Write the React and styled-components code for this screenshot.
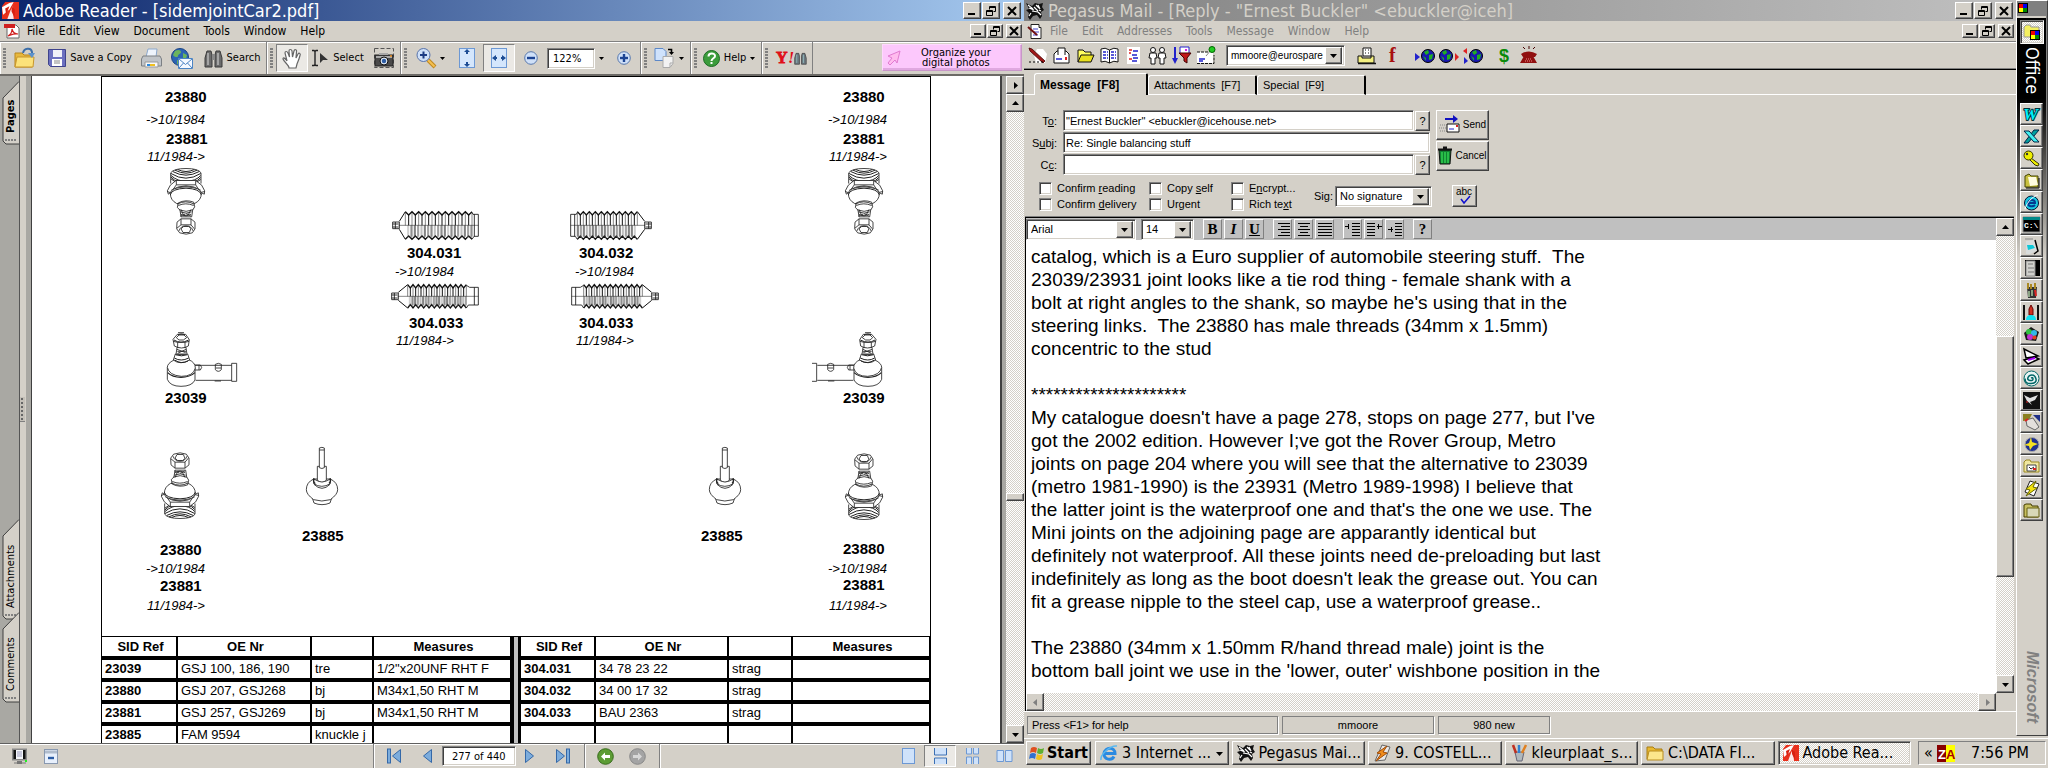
import React from "react";
import styled, { createGlobalStyle, css } from "styled-components";

const face = "#d4d0c8";
const ui = `"DejaVu Sans Condensed", "DejaVu Sans", sans-serif`;
const sans = `"Liberation Sans", Arial, sans-serif`;

const raised = css`
  border: 1px solid;
  border-color: #fff #404040 #404040 #fff;
  box-shadow: inset -1px -1px #808080;
  background: ${face};
`;
const sunken = css`
  border: 1px solid;
  border-color: #808080 #fff #fff #808080;
  box-shadow: inset 1px 1px #404040, inset -1px -1px ${face};
  background: #fff;
`;
const dither = css`
  background: repeating-conic-gradient(#fff 0 25%, ${face} 0 50%) 0 0 / 2px 2px;
`;

const Global = createGlobalStyle`
  * { box-sizing: border-box; }
  body { margin: 0; background: ${face}; color: #000; overflow: hidden; }
  button, input, select, textarea { font: inherit; color: inherit; margin: 0; padding: 0; border-radius: 0; outline: none; }
  svg { display: block; flex: none; overflow: visible; }
`;

const Desktop = styled.div`
  display: grid;
  grid-template-columns: minmax(0, 1fr) minmax(0, 1fr);
  height: 100vh;
`;
const Screen = styled.div`
  display: flex;
  flex-direction: column;
  min-width: 0;
  min-height: 0;
`;
const Upper = styled.div`
  display: flex;
  flex: 1;
  min-height: 0;
`;
const AppWindow = styled.section`
  display: flex;
  flex-direction: column;
  flex: 1;
  min-width: 0;
  min-height: 0;
  background: ${face};
`;

/* ---------- window chrome ---------- */
const TitleBar = styled.header`
  display: flex;
  align-items: center;
  gap: 4px;
  height: 21px;
  padding: 0 3px 0 2px;
  font: 18px/20px ${ui};
  white-space: nowrap;
  color: ${(p) => (p.$active ? "#fff" : face)};
  background: ${(p) =>
    p.$active ? "linear-gradient(90deg, #0a246a, #a6caf0)" : "linear-gradient(90deg, #808080, #c0c0c0)"};
`;
const TitleText = styled.span`
  flex: 1;
  overflow: hidden;
`;
const WinButtons = styled.div`
  display: flex;
  gap: 1px;
  margin-left: auto;
  & > :last-child {
    margin-left: 2px;
  }
`;
const WinButton = styled.button`
  ${raised}
  display: grid;
  place-items: center;
  width: ${(p) => (p.$small ? 16 : 18)}px;
  height: ${(p) => (p.$small ? 14 : 17)}px;
`;
const MenuBar = styled.nav`
  display: flex;
  align-items: center;
  height: 20px;
  padding: 0 2px 0 4px;
  font: 12px/18px ${ui};
  color: ${(p) => (p.$dim ? "#808080" : "#000")};
`;
const MenuItem = styled.button`
  border: 0;
  background: none;
  padding: 0 7px;
`;

const MinGlyph = () => (
  <svg width="10" height="10"><rect x="1" y="7" width="7" height="2" fill="#000" /></svg>
);
const RestoreGlyph = () => (
  <svg width="10" height="10" fill="none" stroke="#000">
    <path d="M3.500 3.500v-3h6v5h-2M3 1.500h7" /><path d="M.5 4.500h6v5h-6zM0 5.500h7" />
  </svg>
);
const CloseGlyph = () => (
  <svg width="10" height="10" stroke="#000" strokeWidth="2"><path d="M1 1l8 8M9 1l-8 8" /></svg>
);
const WindowControls = ({ small }) => (
  <WinButtons>
    <WinButton $small={small} aria-label="Minimize"><MinGlyph /></WinButton>
    <WinButton $small={small} aria-label="Restore"><RestoreGlyph /></WinButton>
    <WinButton $small={small} aria-label="Close"><CloseGlyph /></WinButton>
  </WinButtons>
);

const Arrow = ({ dir = "down", color = "#000" }) => {
  const d = { down: "M1 3h7l-3.500 4z", up: "M1 6h7l-3.500 -4z", left: "M6 1v7l-4 -3.500z", right: "M3 1v7l4 -3.500z" }[dir];
  return <svg width="9" height="9"><path d={d} fill={color} /></svg>;
};
const Caret = () => <svg width="5" height="3"><path d="M0 0h5l-2.500 3z" /></svg>;

const ScrollButton = styled.button`
  ${raised}
  display: grid;
  place-items: center;
  width: 18px;
  height: 18px;
  flex: none;
`;
const Track = styled.div`
  ${dither}
  flex: ${(p) => p.$grow} 0 0;
`;
const Thumb = styled.div`
  ${raised}
  flex: ${(p) => p.$flex};
`;

/* ---------- reader toolbar ---------- */
const ReaderTools = styled.div`
  display: flex;
  height: 33px;
  border-top: 1px solid #808080;
  box-shadow: inset 0 1px #fff;
  font: 11px/14px ${ui};
  white-space: nowrap;
`;
const ToolGroup = styled.div`
  display: flex;
  align-items: center;
  border-left: 1px solid #fff;
  border-right: 1px solid #808080;
  padding-left: 2px;
`;
const Grip = styled.i`
  width: 3px;
  height: 20px;
  margin-right: ${(p) => (p.$gap ? 3 : 0)}px;
  background: repeating-linear-gradient(#808080 0 2px, ${face} 2px 3px);
`;
const ToolButton = styled.button`
  display: flex;
  align-items: center;
  justify-content: center;
  gap: 4px;
  width: ${(p) => p.$w}px;
  height: 28px;
  border: 1px solid transparent;
  background: none;
  ${(p) =>
    p.$pressed &&
    css`
      border-color: #808080 #fff #fff #808080;
      background: #ebe9e5;
    `}
`;
const ZoomBox = styled.input`
  ${sunken}
  width: 48px;
  height: 21px;
  padding: 0 5px;
`;
const AdButton = styled.button`
  width: 140px;
  height: 27px;
  margin: 2px 2px 0 auto;
  display: flex;
  align-items: center;
  gap: 20px;
  padding: 0 4px;
  border: 1px solid;
  border-color: #ffd8ff #c896c8 #c896c8 #ffd8ff;
  box-shadow: inset -1px -2px #e0a8e0;
  background: #fcc8fc;
  font: 11px/10px ${ui};
`;

const OpenIcon = () => (
  <svg width="22" height="22" viewBox="0 0 22 22">
    <path d="M1 20V6h7l2 2h8v12z" fill="#e8b83c" stroke="#b8861c" />
    <path d="M1 20l2-10h17l-1 10z" fill="#fce27a" stroke="#c8962c" />
    <path d="M9 6c1-5 8-6 9-1v3" fill="none" stroke="#3c6ea8" strokeWidth="2" /><path d="M14 6h7l-3 5z" fill="#5c92cc" />
  </svg>
);
const SaveIcon = () => (
  <svg width="18" height="18" viewBox="0 0 18 18">
    <path d="M.5 .5h17v17h-15l-2-2z" fill="#6c70c0" stroke="#40448c" />
    <rect x="5" y="1" width="9" height="7" fill="#f0f0f8" /><rect x="4" y="10" width="10" height="7" fill="#fff" />
    <path d="M6 12h6M6 14h6" stroke="#888" />
  </svg>
);
const PrintIcon = () => (
  <svg width="21" height="20" viewBox="0 0 21 20">
    <path d="M5 9L7 1h9l-1 8z" fill="#eef4fc" stroke="#8ca8cc" />
    <path d="M2 8h17l1.500 3v7H.5v-7z" fill="#c0c4c8" stroke="#7c8084" />
    <path d="M4 14h13v5H4z" fill="#f8f8f8" stroke="#999" /><path d="M6 17h3" stroke="#2a8ae0" strokeWidth="2" /><path d="M9 17h5" stroke="#f0c020" strokeWidth="2" />
  </svg>
);
const MailGlobeIcon = () => (
  <svg width="22" height="21" viewBox="0 0 22 21">
    <circle cx="9" cy="9" r="8.500" fill="#2c64b4" stroke="#1c4484" />
    <path d="M4 3c3-2 6-1 6 1s-3 2-3 4-4 1-5-1zM12 5l4 2-1 4-3-1zM6 12l3 1-1 4-2-1z" fill="#6cb45c" />
    <path d="M7.500 10.500h14v10h-14z" fill="#f4f8ff" stroke="#4c84c4" /><path d="M8 11l6.500 5.500L21 11M8 20l4.500-5M21 20l-4.500-5" fill="none" stroke="#4c84c4" />
  </svg>
);
const Binoculars = () => (
  <svg width="19" height="19" viewBox="0 0 19 19">
    <path d="M3 2h4l1 4v12H1V9zM12 2h4l2 7v9h-7V6z" fill="#6c6c6c" stroke="#3a3a3a" />
    <path d="M8 5h3v6H8z" fill="#888" /><path d="M4 4v12M14 4v12" stroke="#b8b8b8" strokeWidth="1.500" />
  </svg>
);
const HandIcon = () => (
  <svg width="20" height="21" viewBox="0 0 20 21">
    <path d="M7 20c0-3-5-6-6-9 0-2 2-1 4 2L3 5c0-2 2-2 3 0l1.500 4L7 3c0-2 2.500-2 3 0l.5 6L12 3c.5-2 3-1.500 2.500.5L14 10l2-4c1-1.500 3-.5 2 1.500-1 4-2 6-3 8.500L14 20z" fill="#fff" stroke="#666" strokeWidth="1.200" />
  </svg>
);
const SelectIcon = () => (
  <svg width="18" height="18" viewBox="0 0 18 18">
    <path d="M1 1.500h2l1 1 1-1h2M4 2v14M1 16.500h2l1-1 1 1h2" fill="none" stroke="#222" strokeWidth="1.400" /><path d="M9 4l8 7h-5l-3 3z" fill="#333" />
  </svg>
);
const CameraIcon = () => (
  <svg width="20" height="20" viewBox="0 0 20 20">
    <rect x=".5" y=".5" width="19" height="19" fill="none" stroke="#555" strokeDasharray="4 2" />
    <path d="M1 7h18v11H1z" fill="#4a4a4a" stroke="#222" /><path d="M5 5h9v2H5zM2 8h16v2H2z" fill="#a8a8a8" />
    <circle cx="10" cy="13" r="4" fill="#dde6f0" stroke="#111" /><circle cx="10" cy="13" r="2.200" fill="#2c5ca4" /><circle cx="17" cy="8" r="1" fill="#f09020" />
  </svg>
);
const MagnifierIcon = () => (
  <svg width="20" height="20" viewBox="0 0 20 20">
    <path d="M12 12l7 7" stroke="#c08820" strokeWidth="4" /><path d="M12 12l6.500 6.500" stroke="#f4c050" strokeWidth="2" />
    <circle cx="7.500" cy="7" r="6.500" fill="#cfe0f8" stroke="#5874ac" /><path d="M4 7h7M7.500 3.500v7" stroke="#1c3c84" strokeWidth="2" />
  </svg>
);
const FitIcon = ({ wide }) => (
  <svg width="16" height="20" viewBox="0 0 16 20">
    <rect x=".5" y=".5" width="15" height="19" fill="#d4e6fc" stroke="#6c98d4" />
    {wide ? (
      <path d="M1 10l4-3v2h1v2H5v2zM15 10l-4-3v2h-1v2h1v2z" fill="#1c4c94" />
    ) : (
      <path d="M8 1l3 3H9v2H7V4H5zM8 19l3-3H9v-2H7v2H5z" fill="#1c4c94" />
    )}
  </svg>
);
const RoundZoom = ({ plus }) => (
  <svg width="14" height="14" viewBox="0 0 14 14">
    <circle cx="7" cy="7" r="6.300" fill="#cfe0f8" stroke="#5878ac" /><path d="M3 7h8" stroke="#1c4494" strokeWidth="2.400" />
    {plus && <path d="M7 3v8" stroke="#1c4494" strokeWidth="2.400" />}
  </svg>
);
const RotateIcon = () => (
  <svg width="21" height="20" viewBox="0 0 21 20">
    <path d="M1 .5h8l3 3v9H1z" fill="#cfe2fc" stroke="#5c88c8" /><path d="M9 8.500h10v7l-3 4H9z" fill="#f2f2f2" stroke="#aaa" /><path d="M19 15h-3v4" fill="none" stroke="#aaa" />
    <path d="M14 1.500h3.500v4" fill="none" stroke="#000" strokeWidth="1.600" /><path d="M15 4h5l-2.500 3z" />
  </svg>
);
const HelpIcon = () => (
  <svg width="17" height="17" viewBox="0 0 17 17">
    <circle cx="8.500" cy="8.500" r="8" fill="#3c9c3c" stroke="#1c6c24" /><path d="M5.500 6.500c0-4 6.500-4 6.500-.5C12 8.500 8.500 8 8.500 11" fill="none" stroke="#fff" strokeWidth="2" /><rect x="7.500" y="12" width="2" height="2" fill="#fff" />
  </svg>
);
const YahooIcon = () => (
  <svg width="33" height="20" viewBox="0 0 33 20">
    <text x="2" y="15" fontFamily="Liberation Serif" fontWeight="bold" fontSize="16" fill="#e01018" stroke="#e01018" strokeWidth=".8">Y</text>
    <text x="14" y="15" fontFamily="Liberation Serif" fontWeight="bold" fontStyle="italic" fontSize="16" fill="#e01018">!</text>
    <g transform="translate(20 4) scale(.68)"><path d="M3 2h4l1 4v12H1V9zM12 2h4l2 7v9h-7V6z" fill="#6c7880" stroke="#3a3a3a" /><path d="M4 4v12M14 4v12" stroke="#9cc" /></g>
  </svg>
);
const CursorArrow = () => (
  <svg width="14" height="16" viewBox="0 0 14 16"><path d="M13 1L1 6l4 2-4 5 2 2 5-5 2 3z" fill="#fbe" stroke="#e07ad0" /></svg>
);
const AdobeIcon = ({ w = 16 }) => (
  <svg width={w} height={w} viewBox="0 0 16 16">
    <path d="M3 0h13v16H0V4z" fill="#e8301c" /><path d="M0 5l7-4 4-1-4 7-6 5z" fill="#fff" /><path d="M5 16l3-8 2-4 1 12z" fill="#fff" opacity=".9" />
    <path d="M3 6l4-2-3 8zM9 4l3 3v8l-3-6z" fill="#d82010" />
  </svg>
);
const PdfIcon = () => (
  <svg width="16" height="16" viewBox="0 0 16 16">
    <path d="M3 2h9l3 3v10H3z" fill="#fff" stroke="#666" /><path d="M0 1h11v4H0z" fill="#d02020" />
    <path d="M4 13c4-2 4-5 4-7 1 4 3 5 6 5-4-1-7 1-10 2z" fill="none" stroke="#d02020" strokeWidth="1.200" />
  </svg>
);

/* ---------- reader body ---------- */
const ReaderBody = styled.div`
  display: flex;
  flex: 1;
  min-height: 0;
  border-top: 2px solid #6c6a66;
`;
const Rail = styled.div`
  display: flex;
  flex-direction: column;
  justify-content: space-between;
  width: 20px;
  padding: 5px 0 40px 2px;
  background: #a9a8a3;
  border-right: 1px solid #555;
`;
const RailStack = styled.div`
  display: flex;
  flex-direction: column;
`;
const RailTab = styled.button`
  position: relative;
  width: 17px;
  height: ${(p) => p.$h}px;
  border: 0;
  padding: 0 0 12px;
  background: none;
  writing-mode: vertical-rl;
  text-align: right;
  font: ${(p) => (p.$bold ? "bold" : "normal")} 11px/16px ${ui};
  & + & {
    margin-top: -8px;
  }
`;
const TabShape = styled.svg`
  position: absolute;
  inset: 0;
`;
const TabText = styled.span`
  position: relative;
  display: block;
  height: 100%;
  transform: rotate(180deg);
  text-align: left;
`;
const SideTab = ({ h, bold, children }) => (
  <RailTab $h={h} $bold={bold}>
    <TabShape width="17" height={h}>
      <path d={`M17 .5L1 17V${h - 4}l3 3h13`} fill={face} stroke="#404040" />
      <path d={`M3 ${h - 5}h12`} stroke="#808080" strokeWidth="2" strokeDasharray="2 1" />
    </TabShape>
    <TabText>{children}</TabText>
  </RailTab>
);
const Splitter = styled.div`
  display: flex;
  align-items: center;
  width: 6px;
  background: ${face};
  &::after {
    content: "";
    width: 5px;
    height: 24px;
    border-bottom: 1px solid #808080;
    background: radial-gradient(#666 1px, transparent 1px) 0 0 / 4px 4px #c4c0b8;
  }
`;
const DocView = styled.div`
  display: flex;
  flex: 1;
  min-width: 0;
  border: 0 solid #a9a8a3;
  border-width: 0 4px 0 5px;
  box-shadow: inset 1px 0 #404040;
`;
const Paper = styled.main`
  display: flex;
  justify-content: center;
  flex: 1;
  min-width: 0;
  overflow: hidden;
  background: #fff;
  border: 1px solid #404040;
  border-width: 0 2px 0 1px;
`;
const Sheet = styled.article`
  flex: none;
  width: 830px;
  border: 1px solid #000;
  border-bottom: 0;
`;
const Diagram = styled.div`
  position: relative;
  height: 559px;
`;
const PartNumber = styled.b`
  position: absolute;
  left: ${(p) => p.$x}px;
  top: ${(p) => p.$y}px;
  font: bold 15px/14px ${sans};
`;
const PartDate = styled.i`
  position: absolute;
  left: ${(p) => p.$x}px;
  top: ${(p) => p.$y}px;
  font: italic 13px/16px ${sans};
  white-space: nowrap;
`;
const Figure = styled.svg`
  position: absolute;
  left: ${(p) => p.$x}px;
  top: ${(p) => p.$y}px;
`;
const DocScroll = styled.div`
  display: flex;
  flex-direction: column;
  width: 18px;
`;

const line = { fill: "none", stroke: "#222", strokeWidth: 2.5 };
const BallJoint = ({ x, y, flip }) => (
  <Figure $x={x} $y={y} width="38" height="67" viewBox="0 0 114 200">
    <g {...line} transform={flip ? "translate(0 200) scale(1 -1)" : undefined}>
      <path d="M11 46V14Q20 1 57 1t45 13v32" fill="#fff" />
      <path d="M12 16Q57 44 101 16M17 10q40 22 80 0M24 6q33 18 66 0M32 4q25 12 50 0M12 22q20 18 45 17 30 0 44-17M12 27q10 10 20 13M12 32l14 10M101 28q-8 10-20 13M101 34l-12 8" strokeWidth="3" />
      <path d="M1 68l9-17 17-14h59l18 14 9 17-1 10-9-4q-20-18-46-18T12 72l-8 6z" fill="#fff" />
      <path d="M28 37v13h58V37M1 70l10 4 17-24M113 70l-12 3-15-23M13 66q20-13 44-13t44 13" />
      <path d="M10 76q0-18 47-20 46 2 46 20 0 20-20 30H29Q10 96 10 76z" fill="#fff" />
      <path d="M10 80q3-18 47-20 42 2 46 20" strokeWidth="3" />
      <path d="M34 104l-3 14 8 8 3 20h32l3-20 6-10-3-14q-23-9-46 2z" fill="#fff" />
      <path d="M31 108q25-14 51 0M34 112q22-10 46 0M37 125q20 9 41 0M40 131q18 8 34 0M42 138q15 10 30 0M42 124l8 18 14-2 8-16M40 144l14-6M72 144l-14-8" strokeWidth="2.500" />
      <path d="M30 162l12-10h30l12 10v20l-8 12q-18 8-38 0l-9-12z" fill="#fff" />
      <path d="M42 152v18M72 152v18M30 180l12-10h30l10 12M42 182l8-7h15l7 6-5 12H48zM36 188q5-15 21-15t21 15" />
    </g>
  </Figure>
);
const TieRod = ({ x, y, flip }) => (
  <Figure $x={x} $y={y} width="71" height="56" viewBox="0 0 213 168">
    <g {...line} transform={flip ? "translate(213 0) scale(-1 1)" : undefined}>
      <path d="M84 100h110M86 145h108" strokeWidth="2.500" /><path d={flip ? "M210 94h-14v54h14" : "M194 94h15v54h-15z"} />
      <path d="M145 97q9-6 18 0v16q-9 10-18 0zM147 108h15M143 147h19" /><path d="M84 99h16q8 7 0 15H84M96 99v15" />
      <path d="M1 106v36q8 21 41 21t42-19v-36" fill="#fff" />
      <path d="M1 106q0-12 20-22l44-1q20 8 20 25-6 25-42 25Q6 130 1 106z" fill="#fff" />
      <path d="M2 122q14 14 40 14t42-14" strokeWidth="3.500" />
      <path d="M25 66l-6 18q20 16 49 0l-6-18z" fill="#fff" /><path d="M22 78q20 12 43 0M23 84q20 14 40 3M26 68q18 7 34 0" strokeWidth="3" />
      <path d="M30 46l-3 22h33l-3-22z" fill="#fff" /><path d="M30 52l26 10M57 52L32 64M31 58h26M29 66h28" strokeWidth="2.500" />
      <path d="M18 22L31 7h25l11 16-3 19q-20 12-42 0z" fill="#fff" />
      <path d="M33 2h18M32 8q11-5 22 0M28 17l8-8h15l8 8-10 7H36zM19 28l13 3h22l12-3M32 31v16M54 31v16" /><path d="M21 24q20 13 44 0" strokeWidth="3" />
    </g>
  </Figure>
);
const Stem = ({ x, y }) => (
  <Figure $x={x} $y={y} width="32" height="58" viewBox="0 0 96 174">
    <g {...line}>
      <path d="M18 150l6 18q24 10 48 0l6-18" /><path d="M1 128q0-22 22-32h50q22 10 22 32 0 14-22 30-26 8-50 0Q1 142 1 128z" fill="#fff" />
      <path d="M23 96v14q24 16 50 0V96q-24 16-50 0zM24 112q24 24 48 0" /><path d="M24 94q-4 12 4 16M72 94q4 10-3 15" strokeWidth="4" />
      <path d="M34 58v42q14 10 27 0V58z" fill="#fff" /><path d="M40 62V3q8-4 15 0v59q-7 5-15 0zM40 9h15" fill="#fff" />
    </g>
  </Figure>
);
const ribs = (start, pitch, count, valley, peak) => {
  let d = `M${start} ${peak}`;
  for (let i = 0; i < count; i += 1) d += `l${pitch / 2} ${valley - peak}l${pitch / 2} ${peak - valley}`;
  return d;
};
const boots = {
  wide: { w: 261, s: 40, pitch: 20, n: 10, b: 85, m: 43, shoulder: 3 },
  short: { w: 246, s: 44, pitch: 18, n: 10, b: 85, m: 43, shoulder: 3 },
  slim: { w: 264, s: 50, pitch: 16, n: 11, b: 72, m: 37, shoulder: 10 },
};
const Bellows = ({ x, y, kind, flip }) => {
  const p = boots[kind];
  const xs = Array.from({ length: p.n * 2 + 1 }, (_, i) => p.s + (i * p.pitch) / 2);
  const end = p.s + p.pitch * p.n;
  return (
    <Figure $x={x} $y={y} width={p.w / 3} height={30} viewBox={`0 0 ${p.w} 90`}>
      <g fill="none" stroke="#111" transform={flip ? `translate(${p.w} 0) scale(-1 1)` : undefined}>
        <path d={ribs(p.s, p.pitch, p.n, 12, 2)} strokeWidth="4" />
        <path d={ribs(p.s, p.pitch, p.n, p.b - 10, p.b)} strokeWidth="4" />
        {xs.map((v, i) => (
          <path key={v} d={`M${v} ${i % 2 ? 12 : 5}V${p.m}`} strokeWidth={i % 2 ? 3 : 1.5} />
        ))}
        {xs.slice(1).map((v, i) => (
          <path key={v} d={`M${v - 3} ${p.m}V${p.b - 4}M${v} ${p.m}V${p.b - 8}`} strokeWidth={i % 4 === 0 ? 1 : 2} stroke={i % 3 ? "#333" : "#666"} />
        ))}
        <path d={`M20 ${p.m}H${p.w - 2}`} strokeWidth="1.500" />
        <path d={`M${p.s} 2L22 ${p.m - 12}M${p.s} ${p.b}L22 ${p.m + 12}`} strokeWidth={3} />
        <path d={`M2 ${p.m - 10}h20v20H2zM2 ${p.m - 4}h18M2 ${p.m + 5}h18M10 ${p.m - 10}v20`} strokeWidth="2.500" />
        <path d={`M${end} 4l${p.shoulder} 6H${p.w - 2}V${p.b - 9}H${end + 6}L${end} ${p.b}M${p.w - 14} 10V${p.b - 9}`} strokeWidth="2.500" />
      </g>
    </Figure>
  );
};

const numbers = [
  ["23880", 63, 13], ["23881", 64, 55], ["23880", 741, 13], ["23881", 741, 55],
  ["304.031", 305, 169], ["304.033", 307, 239], ["304.032", 477, 169], ["304.033", 477, 239],
  ["23039", 63, 314], ["23039", 741, 314], ["23885", 200, 452], ["23885", 599, 452],
  ["23880", 58, 466], ["23881", 58, 502], ["23880", 741, 465], ["23881", 741, 501],
];
const dates = [
  ["->10/1984", 44, 35], ["11/1984->", 45, 72], ["->10/1984", 726, 35], ["11/1984->", 727, 72],
  ["->10/1984", 293, 187], ["11/1984->", 294, 256], ["->10/1984", 473, 187], ["11/1984->", 474, 256],
  ["->10/1984", 44, 484], ["11/1984->", 45, 521], ["->10/1984", 726, 484], ["11/1984->", 727, 521],
];

const PartsTable = styled.table`
  width: 829px;
  table-layout: fixed;
  border-collapse: separate;
  border-spacing: 0;
  border-top: 1px solid #000;
  font: 13px/18px ${sans};
  white-space: nowrap;
`;
const Cell = styled.td`
  height: ${(p) => (p.$head ? 23 : 22)}px;
  padding: 0 0 0 3px;
  border-right: 2px solid #000;
  border-bottom: 4px solid #000;
  overflow: hidden;
  font-weight: ${(p) => (p.$bold ? "bold" : "normal")};
  text-align: ${(p) => (p.$head ? "center" : "left")};
`;
const Gutter = styled.td`
  padding: 0;
  background: #c0c0c0;
  border: solid #000;
  border-width: 0 3px 0 2px;
`;
const cols = [76, 134, 62, 138, 9, 75, 133, 64, 138];
const rows = [
  ["23039", "GSJ 100, 186, 190", "tre", '1/2"x20UNF RHT F', "304.031", "34 78 23 22", "strag", ""],
  ["23880", "GSJ 207, GSJ268", "bj", "M34x1,50 RHT M", "304.032", "34 00 17 32", "strag", ""],
  ["23881", "GSJ 257, GSJ269", "bj", "M34x1,50 RHT M", "304.033", "BAU 2363", "strag", ""],
  ["23885", "FAM 9594", "knuckle j", "", "", "", "", ""],
];
const heads = ["SID Ref", "OE Nr", "", "Measures"];

/* ---------- reader status bar ---------- */
const PageBar = styled.footer`
  display: flex;
  align-items: center;
  height: 25px;
  border-top: 1px solid #606060;
  box-shadow: inset 0 1px #fff;
  font: 11px/14px ${ui};
`;
const BarSection = styled.div`
  display: flex;
  align-items: center;
  height: 24px;
  padding: 0 ${(p) => p.$pad || 0}px;
  gap: ${(p) => p.$gap || 0}px;
  ${(p) => p.$grow && `flex: ${p.$grow} 1 0;`}
  ${(p) => p.$line && "border-left: 1px solid #808080; box-shadow: inset 1px 0 #fff;"}
`;
const IconButton = styled.button`
  display: grid;
  place-items: center;
  width: ${(p) => p.$w || 24}px;
  height: ${(p) => p.$h || 20}px;
  border: 0;
  background: none;
  ${(p) =>
    p.$pressed &&
    css`
      border: 1px solid;
      border-color: #808080 #fff #fff #808080;
      background: #ebe9e5;
    `}
`;
const PageBox = styled.input`
  ${sunken}
  width: 74px;
  height: 20px;
  text-align: center;
`;
const NavIcon = ({ end, flip }) => (
  <svg width="17" height="16" viewBox="0 0 17 16">
    <g transform={flip ? "translate(17 0) scale(-1 1)" : undefined} stroke="#3468a8" fill="#7cacdc">
      {end && <rect x="1.500" y="1" width="3" height="14" />}
      <path d="M14.500 1.500v13l-8-6.500z" />
    </g>
  </svg>
);
const RoundArrow = ({ next }) => (
  <svg width="17" height="17" viewBox="0 0 17 17">
    <circle cx="8.500" cy="8.500" r="7.800" fill={next ? "#a4a4a4" : "#5c9c34"} stroke={next ? "#888" : "#386c1c"} />
    <path d={next ? "M13 8.500L9 4.500v2.500H4v3h5v2.500z" : "M4 8.500l4-4V7h5v3H8v2.500z"} fill={next ? "#d8d8d8" : "#fff"} />
  </svg>
);
const PageLayout = ({ kind }) => (
  <svg width="17" height="16" viewBox="0 0 17 16" fill="#cfe2fa" stroke="#6c98d4">
    {kind === "single" && <rect x="2.500" y=".5" width="12" height="15" />}
    {kind === "scroll" && <path d="M2.500 0v7h12V0M2.500 16v-6h12v6" stroke="#3c70b4" />}
    {kind === "grid" && <path d="M2.500 0v6h5V0M9.500 0v6h5V0M2.500 16V9h5v7M9.500 16V9h5v7" />}
    {kind === "facing" && <path d="M1 2.500h6.500v11H1zM9.500 2.500H16v11H9.500z" />}
  </svg>
);
const ScreenIcon = () => (
  <svg width="17" height="16" viewBox="0 0 17 16">
    <path d="M1 .5h15v12H1z" fill="#888" /><path d="M2.500 2h12v9h-12z" fill="#111" /><path d="M5 2h7v9H5z" fill="#f4f6fa" /><path d="M6 4h5M6 6h5M6 8h5" stroke="#99b" />
    <path d="M6 13h5v3H6z" fill="#777" /><path d="M3 15h12" stroke="#777" /><rect x="14" y="12" width="2" height="2" fill="#2e2" />
  </svg>
);
const CollapseIcon = () => (
  <svg width="15" height="16" viewBox="0 0 15 16">
    <rect x=".5" y="1.500" width="13" height="14" fill="#e8f0fc" stroke="#8898b0" /><path d="M1 4h12" stroke="#b0bccc" strokeWidth="3" /><path d="M4 10h6" stroke="#2c5ca4" strokeWidth="2.400" />
  </svg>
);

function Reader() {
  return (
    <AppWindow>
      <TitleBar $active>
        <AdobeIcon w={17} />
        <TitleText>Adobe Reader - [sidemjointCar2.pdf]</TitleText>
        <WindowControls />
      </TitleBar>
      <MenuBar>
        <PdfIcon />
        {["File", "Edit", "View", "Document", "Tools", "Window", "Help"].map((m) => <MenuItem key={m}>{m}</MenuItem>)}
        <WindowControls small />
      </MenuBar>
      <ReaderTools>
        <ToolGroup>
          <Grip />
          <ToolButton $w={38} aria-label="Open"><OpenIcon /></ToolButton>
          <ToolButton $w={92}><SaveIcon />Save a Copy</ToolButton>
          <ToolButton $w={30} aria-label="Print"><PrintIcon /></ToolButton>
          <ToolButton $w={32} aria-label="Email"><MailGlobeIcon /></ToolButton>
          <ToolButton $w={68}><Binoculars />Search</ToolButton>
        </ToolGroup>
        <ToolGroup>
          <Grip $gap />
          <ToolButton $w={32} $pressed aria-label="Hand"><HandIcon /></ToolButton>
          <ToolButton $w={59}><SelectIcon />Select</ToolButton>
          <ToolButton $w={33} aria-label="Snapshot"><CameraIcon /></ToolButton>
        </ToolGroup>
        <ToolGroup>
          <Grip $gap />
          <ToolButton $w={41} aria-label="Zoom in tool"><MagnifierIcon /><Caret /></ToolButton>
          <ToolButton $w={32} aria-label="Fit page"><FitIcon /></ToolButton>
          <ToolButton $w={32} $pressed aria-label="Fit width"><FitIcon wide /></ToolButton>
          <ToolButton $w={32} aria-label="Zoom out"><RoundZoom /></ToolButton>
          <ZoomBox defaultValue="122%" aria-label="Zoom" />
          <ToolButton $w={13} aria-label="Zoom levels"><Caret /></ToolButton>
          <ToolButton $w={32} aria-label="Zoom in"><RoundZoom plus /></ToolButton>
        </ToolGroup>
        <ToolGroup>
          <Grip />
          <ToolButton $w={43} aria-label="Rotate"><RotateIcon /><Caret /></ToolButton>
        </ToolGroup>
        <ToolGroup>
          <Grip />
          <ToolButton $w={64}><HelpIcon />Help<Caret /></ToolButton>
        </ToolGroup>
        <ToolGroup>
          <Grip />
          <ToolButton $w={44} aria-label="Yahoo search"><YahooIcon /></ToolButton>
        </ToolGroup>
        <AdButton><CursorArrow /><span>Organize your<br />digital photos</span></AdButton>
      </ReaderTools>
      <ReaderBody>
        <Rail>
          <SideTab h={64} bold>Pages</SideTab>
          <RailStack>
            <SideTab h={101}>Attachments</SideTab>
            <SideTab h={91}>Comments</SideTab>
          </RailStack>
        </Rail>
        <Splitter />
        <DocView>
          <Paper>
            <Sheet>
              <Diagram>
                {numbers.map(([t, x, y]) => <PartNumber key={`${x}-${y}`} $x={x} $y={y}>{t}</PartNumber>)}
                {dates.map(([t, x, y]) => <PartDate key={`${x}-${y}`} $x={x} $y={y}>{t}</PartDate>)}
                <BallJoint x={65} y={91} />
                <BallJoint x={743} y={91} />
                <BallJoint x={59} y={375} flip />
                <BallJoint x={743} y={376} flip />
                <Bellows x={290} y={134} kind="wide" />
                <Bellows x={468} y={134} kind="short" flip />
                <Bellows x={289} y={207} kind="slim" />
                <Bellows x={469} y={207} kind="slim" flip />
                <TieRod x={65} y={255} />
                <TieRod x={709} y={255} flip />
                <Stem x={204} y={370} />
                <Stem x={607} y={370} />
              </Diagram>
              <PartsTable>
                <colgroup>{cols.map((w, i) => <col key={i} width={w} />)}</colgroup>
                <thead>
                  <tr>
                    {heads.map((h, i) => <Cell as="th" $bold $head key={`a${i}`}>{h}</Cell>)}
                    <Gutter />
                    {heads.map((h, i) => <Cell as="th" $bold $head key={`b${i}`}>{h}</Cell>)}
                  </tr>
                </thead>
                <tbody>
                  {rows.map((r) => (
                    <tr key={r[0]}>
                      {r.slice(0, 4).map((c, i) => <Cell $bold={i === 0} key={`a${i}`}>{c}</Cell>)}
                      <Gutter />
                      {r.slice(4).map((c, i) => <Cell $bold={i === 0} key={`b${i}`}>{c}</Cell>)}
                    </tr>
                  ))}
                </tbody>
              </PartsTable>
            </Sheet>
          </Paper>
        </DocView>
        <DocScroll>
          <ScrollButton aria-label="Expand"><Arrow dir="right" /></ScrollButton>
          <ScrollButton aria-label="Scroll up"><Arrow dir="up" /></ScrollButton>
          <Track $grow={382} />
          <Thumb $flex="0 0 8px" />
          <Track $grow={225} />
          <ScrollButton aria-label="Scroll down"><Arrow /></ScrollButton>
        </DocScroll>
      </ReaderBody>
      <PageBar>
        <BarSection $grow={368} $pad={7} $gap={8}>
          <IconButton aria-label="Full screen"><ScreenIcon /></IconButton>
          <IconButton aria-label="Hide toolbars"><CollapseIcon /></IconButton>
        </BarSection>
        <BarSection $line $pad={6} $gap={4}>
          <IconButton $w={30} aria-label="First page"><NavIcon end /></IconButton>
          <IconButton $w={24} aria-label="Previous page"><NavIcon /></IconButton>
          <PageBox defaultValue="277 of 440" aria-label="Page" />
          <IconButton $w={24} aria-label="Next page"><NavIcon flip /></IconButton>
          <IconButton $w={30} aria-label="Last page"><NavIcon end flip /></IconButton>
        </BarSection>
        <BarSection $line $pad={9} $gap={8}>
          <IconButton aria-label="Previous view"><RoundArrow /></IconButton>
          <IconButton aria-label="Next view"><RoundArrow next /></IconButton>
        </BarSection>
        <BarSection $line $grow={234} />
        <BarSection $pad={4}>
          <IconButton $w={32} aria-label="Single page"><PageLayout kind="single" /></IconButton>
          <IconButton $w={32} $h={22} $pressed aria-label="Continuous"><PageLayout kind="scroll" /></IconButton>
          <IconButton $w={32} aria-label="Continuous facing"><PageLayout kind="grid" /></IconButton>
          <IconButton $w={32} aria-label="Facing"><PageLayout kind="facing" /></IconButton>
        </BarSection>
      </PageBar>
    </AppWindow>
  );
}

/* ---------- mail icons ---------- */
const PegasusIcon = ({ w = 18 }) => (
  <svg width={w} height={w} viewBox="0 0 18 18">
    <path d="M0 1l6 3 3-3 4 1 4-1-1 4 2 3-3 2 1 4-2 3-3-4-4 1-3 4-2-3 1-4-3-3 3-1z" fill="#111" />
    <path d="M2 3l5 4M3 6l5 2M10 3l3 3M12 3l2 4M6 9l6 1M5 11l-2 3M12 10l3 3M8 5l4 4M13 8l2 1" stroke="#fff" strokeWidth="1.200" />
  </svg>
);
const NoteIcon = () => (
  <svg width="15" height="15" viewBox="0 0 15 15">
    <path d="M3 .5h8v3h2v11H3z" fill="#fff" stroke="#222" /><path d="M5 5h5M5 8h6M5 11h5" stroke="#44c" /><path d="M0 3l9 8" stroke="#701010" strokeWidth="2" />
  </svg>
);
const mailIcons = {
  Compose: <><path d="M9 3h6l4 5-2 9H8L6 9z" fill="#fff" /><path d="M1 2l3 1 13 12-2 2L2 5z" fill="#a01818" stroke="#400" strokeWidth=".8" /><path d="M1 16h16" stroke="#000" strokeDasharray="2 2" /></>,
  Inbox: <><path d="M2 8l3-3h9l3 3v9H2z" fill="#fff" stroke="#111" /><path d="M6 9V2h7v7" fill="#fff" stroke="#111" /><path d="M4 13h6" stroke="#22c" strokeWidth="1.500" /><rect x="13" y="11" width="2" height="3" fill="#d22" /></>,
  Folders: <><path d="M2 16V4h5l2 2h6v3" fill="#ffff60" stroke="#111" /><path d="M2 16l3-7h13l-3 7z" fill="#e8e020" stroke="#111" /></>,
  "Address book": <><path d="M9.500 4Q5 1 1 3v13q4-2 8.500 1Q14 14 18 16V3q-4-2-8.500 1z" fill="#fff" stroke="#111" /><path d="M9.500 4v13" stroke="#111" /><path d="M3 6h5M3 9h5M3 12h5M11 6h5M11 9h5M11 12h5" stroke="#22c" strokeWidth="1.300" strokeDasharray="3 1" /></>,
  Lists: <><path d="M3 1h13v17H3z" fill="#fff" /><path d="M5 4h3M5 7h2M5 13h3" stroke="#d22" strokeWidth="1.500" /><path d="M9 5h5M8 9h5M9 12h5M8 15h5" stroke="#22c" strokeWidth="1.500" /></>,
  Users: <><g fill="#fff" stroke="#111"><circle cx="5" cy="4" r="2.500" /><path d="M2 7h6l1 5H7v6H3v-6H1z" /><circle cx="14" cy="4" r="2.500" /><path d="M11 7h6l1 5h-2v6h-4v-6h-2z" /></g></>,
  Filters: <><path d="M3 1v13" stroke="#22c" strokeWidth="2" /><path d="M0 12h6l-3 6z" fill="#22c" /><path d="M8 1h9v7H8z" fill="#fff" stroke="#22c" /><path d="M7 7h12l-4 5v5l-3-2v-3z" fill="#c01818" stroke="#400" /><rect x="13" y="3" width="2" height="2" fill="#d2d" /></>,
  Notes: <><path d="M1 6h16v11H1z" fill="#fff" /><path d="M1 6h12M1 17.500h17V9" stroke="#111" fill="none" strokeDasharray="3 1" /><path d="M3 13h6M3 15h4" stroke="#22c" strokeWidth="1.500" /><path d="M10 10l5-6" stroke="#888" /><circle cx="16" cy="3.500" r="3" fill="#2c2" stroke="#060" /></>,
  Print: <><path d="M6 2h8v8H6z" fill="#fff" stroke="#111" /><path d="M8 4h1M11 4h1M8 7h1M11 7h1" stroke="#111" /><path d="M1 10h4v2h9v-2h3v7H1z" fill="#f4f080" stroke="#111" /><path d="M1 17.500h18" stroke="#111" strokeWidth="1.500" /></>,
  Font: <text x="6" y="16" fontFamily="Liberation Serif" fontWeight="bold" fontSize="20" fill="#a81010">f</text>,
  Dollar: <text x="4" y="16" fontFamily="Liberation Sans" fontWeight="bold" fontSize="18" fill="#0a8a0a">$</text>,
  Phone: <><path d="M2 8q8-5 16 0l-2 3H4zM5 10h9l4 7H1z" fill="#901010" /><path d="M7 13h6M6 15h8" stroke="#e88" strokeDasharray="1 1" /><path d="M6 3l-2-2M10 3V0M14 3l2-2" stroke="#400" /></>,
};
const Globe = ({ cx }) => (
  <><circle cx={cx} cy="10" r="6.500" fill="#1818b0" stroke="#000" /><path d={`M${cx - 4} 6l4-2 1 3-3 2zM${cx + 1} 9l4-1-1 5-3 1zM${cx - 5} 10l3 2v3z`} fill="#20b020" /></>
);
const SmallIcon = ({ children, w = 20 }) => <svg width={w} height="20" viewBox={`0 0 ${w} 20`}>{children}</svg>;

/* ---------- mail window ---------- */
const MailTools = styled.div`
  display: flex;
  align-items: center;
  height: 29px;
  padding: 0 2px;
  gap: 8px;
  border-top: 1px solid #808080;
  border-bottom: 1px solid #000;
  box-shadow: inset 0 1px #fff, inset 0 -1px #808080;
`;
const IconRow = styled.div`
  display: flex;
`;
const Combo = styled.div`
  ${sunken}
  display: flex;
  align-items: center;
  width: ${(p) => p.$w}px;
  height: 21px;
  padding: 2px;
  font: ${(p) => (p.$tight ? 10 : 11)}px/14px ${sans};
`;
const ComboSelect = styled.select`
  appearance: none;
  flex: 1;
  min-width: 0;
  height: 15px;
  padding-left: 2px;
  border: 0;
  background: #fff;
`;
const ComboArrow = styled.span`
  ${raised}
  display: grid;
  place-items: center;
  width: 17px;
  height: 17px;
`;
const Dropdown = ({ w, value, label, id, tight }) => (
  <Combo $w={w} $tight={tight}>
    <ComboSelect aria-label={label} id={id} defaultValue={value}><option>{value}</option></ComboSelect>
    <ComboArrow><Arrow /></ComboArrow>
  </Combo>
);
const Tabs = styled.div`
  display: flex;
  align-items: flex-end;
  height: 25px;
  padding-left: 10px;
  box-shadow: inset 0 -1px #fff;
  font: 11px/14px ${sans};
  white-space: pre;
`;
const Tab = styled.button`
  width: ${(p) => (p.$active ? 114 : 109)}px;
  height: ${(p) => (p.$active ? 22 : 20)}px;
  padding-left: 5px;
  text-align: left;
  background: ${face};
  border: solid;
  border-width: 1px 2px 0 1px;
  border-color: #fff #000 #fff #fff;
  border-radius: 3px 2px 0 0;
  ${(p) => (p.$active ? "font-weight: bold; font-size: 12px;" : "border-bottom: 1px solid #fff;")}
`;
const ComposeForm = styled.form`
  padding: 15px 2px 6px;
  height: 122px;
  font: 11px/14px ${sans};
  display: flex;
  flex-direction: column;
  gap: 6px;
`;
const FieldsRow = styled.div`
  display: flex;
  gap: 6px;
`;
const Fields = styled.div`
  display: grid;
  grid-template-columns: 37px 352px 15px;
  grid-auto-rows: 21px;
  row-gap: 1px;
  align-items: center;
`;
const FieldLabel = styled.label`
  text-align: right;
  padding-right: 6px;
`;
const Field = styled.input`
  ${sunken}
  height: 21px;
  margin-right: ${(p) => (p.$wide ? 0 : 1)}px;
  padding: 0 2px;
  ${(p) => p.$wide && "grid-column: span 2;"}
`;
const QueryButton = styled.button`
  ${raised}
  height: 20px;
`;
const Actions = styled.div`
  display: flex;
  flex-direction: column;
  gap: 1px;
`;
const ActionButton = styled.button`
  ${raised}
  display: flex;
  align-items: center;
  justify-content: center;
  gap: 3px;
  width: 53px;
  height: 30px;
  font-size: 10px;
`;
const OptionsRow = styled.div`
  display: flex;
  align-items: center;
  padding-left: 13px;
`;
const Checks = styled.div`
  display: grid;
  grid-template-columns: 110px 82px 83px;
  row-gap: 2px;
`;
const Check = styled.label`
  display: flex;
  align-items: center;
  gap: 5px;
  white-space: nowrap;
`;
const Box = styled.input`
  ${sunken}
  appearance: none;
  width: 13px;
  height: 13px;
`;
const SigLabel = styled.label`
  width: 21px;
`;
const SpellButton = styled.button`
  ${raised}
  width: 25px;
  height: 22px;
  margin-left: 20px;
`;
const Editor = styled.div`
  display: flex;
  flex: 1;
  min-height: 0;
  margin: 0 2px 0 1px;
  border-top: 1px solid #000;
  border-left: 1px solid #000;
  box-shadow: 0 -1px #808080;
`;
const EditPane = styled.div`
  display: flex;
  flex-direction: column;
  flex: 1;
  min-width: 0;
`;
const FormatBar = styled.div`
  display: flex;
  align-items: center;
  gap: 9px;
  height: 22px;
  background: #c0c0c0;
`;
const FormatGroup = styled.div`
  display: flex;
  gap: ${(p) => p.$gap || 2}px;
`;
const FormatButton = styled.button`
  display: grid;
  place-items: center;
  width: 19px;
  height: 20px;
  background: #c0c0c0;
  border: 1px solid;
  border-color: #fff #808080 #808080 #fff;
  font: bold 15px/16px "Liberation Serif", serif;
`;
const Body = styled.textarea`
  flex: 1;
  min-height: 0;
  display: block;
  resize: none;
  border: 0;
  padding: 5px 4px 0 5px;
  overflow: hidden;
  font: 19px/23px ${sans};
  white-space: pre;
`;
const HScroll = styled.div`
  display: flex;
  height: 18px;
`;
const VScroll = styled.div`
  display: flex;
  flex-direction: column;
  width: 18px;
`;
const Corner = styled.div`
  height: 18px;
  background: ${face};
`;
const Status = styled.footer`
  display: flex;
  gap: 4px;
  height: 27px;
  padding: 4px 3px;
  border-top: 1px solid #fff;
  font: 11px/14px ${sans};
`;
const StatusCell = styled.span`
  width: ${(p) => p.$w}px;
  height: 18px;
  padding: 1px 4px;
  text-align: ${(p) => (p.$center ? "center" : "left")};
  border: 1px solid #808080;
  box-shadow: 1px 1px #fff;
`;
const AlignIcon = ({ kind }) => (
  <svg width="16" height="14" viewBox="0 0 16 14" stroke="#000" shapeRendering="crispEdges">
    {kind === "right" && <path d="M3 1.500h12M6 4.500h9M3 7.500h12M6 10.500h9M3 13.500h12" />}
    {kind === "center" && <path d="M2 1.500h12M4 4.500h8M2 7.500h12M4 10.500h8M2 13.500h12" />}
    {kind === "full" && <path d="M1 1.500h14M1 4.500h14M1 7.500h14M1 10.500h14M1 13.500h14" />}
    {kind === "in" && <path d="M7 1.500h8M7 4.500h8M7 7.500h8M7 10.500h8M7 13.500h8M0 4.500h4M3.500 2v5" />}
    {kind === "out" && <path d="M1 1.500h8M1 4.500h8M1 7.500h8M1 10.500h8M1 13.500h8M11 4.500h5M12.500 2v5" />}
    {kind === "first" && <path d="M8 1.500h7M8 4.500h7M8 7.500h7M8 10.500h7M8 13.500h7M1 7.500h5M4.500 5v5" />}
  </svg>
);
const SendIcon = () => (
  <svg width="21" height="20" viewBox="0 0 21 20">
    <path d="M6 4h9" stroke="#1010c0" strokeWidth="2" /><path d="M14 0v8l5-4z" fill="#1010c0" /><path d="M8 9h12v8H8z" fill="#fff" stroke="#111" /><path d="M10 14h5" stroke="#22c" /><rect x="17" y="10" width="2" height="2" fill="#d22" />
    <path d="M1 10h6M0 13h7M1 16h6" stroke="#888" strokeDasharray="1 1" />
  </svg>
);
const TrashIcon = () => (
  <svg width="14" height="20" viewBox="0 0 14 20">
    <path d="M1 4h12l-1 14H2z" fill="#108030" stroke="#111" /><path d="M0 3.500h14M5 1.500h4" stroke="#111" strokeWidth="2" /><path d="M4 6v11M7 6v11M10 6v11" stroke="#30d050" strokeWidth="1.500" />
  </svg>
);

const message = `catalog, which is a Euro supplier of automobile steering stuff.  The
23039/23931 joint looks like a tie rod thing - female shank with a
bolt at right angles to the shank, so maybe he's using that in the
steering links.  The 23880 has male threads (34mm x 1.5mm)
concentric to the stud

*********************
My catalogue doesn't have a page 278, stops on page 277, but I've
got the 2002 edition. However I;ve got the Rover Group, Metro
joints on page 204 where you will see that the alternative to 23039
(metro 1981-1990) is the 23931 (Metro 1989-1998) I believe that
the latter joint is the waterproof one and that's the one we use. The
Mini joints on the adjoining page are apparantly identical but
definitely not waterproof. All these joints need de-preloading but last
indefinitely as long as the boot doesn't leak the grease out. You can
fit a grease nipple to the steel cap, use a waterproof grease..

The 23880 (34mm x 1.50mm R/hand thread male) joint is the
bottom ball joint we use in the 'lower, outer' wishbone position in the`;

const Option = ({ children }) => <Check><Box type="checkbox" /><span>{children}</span></Check>;

function Mail() {
  return (
    <AppWindow>
      <TitleBar>
        <PegasusIcon />
        <TitleText>{'Pegasus Mail - [Reply - "Ernest Buckler" <ebuckler@iceh]'}</TitleText>
        <WindowControls />
      </TitleBar>
      <MenuBar $dim>
        <NoteIcon />
        {["File", "Edit", "Addresses", "Tools", "Message", "Window", "Help"].map((m) => <MenuItem key={m}>{m}</MenuItem>)}
        <WindowControls small />
      </MenuBar>
      <MailTools>
        <IconRow>
          {["Compose", "Inbox", "Folders", "Address book", "Lists", "Users", "Filters", "Notes"].map((n) => (
            <IconButton key={n} aria-label={n}><SmallIcon>{mailIcons[n]}</SmallIcon></IconButton>
          ))}
        </IconRow>
        <Dropdown w={119} value="mmoore@eurospare" label="Identity" tight />
        <IconRow>
          <IconButton $w={28} aria-label="Print"><SmallIcon>{mailIcons.Print}</SmallIcon></IconButton>
          <IconButton aria-label="Font"><SmallIcon>{mailIcons.Font}</SmallIcon></IconButton>
        </IconRow>
        <IconRow>
          <IconButton aria-label="Get mail"><SmallIcon w={22}><path d="M1 7l5 4-5 4z" fill="#22c" /><Globe cx={14} /></SmallIcon></IconButton>
          <IconButton aria-label="Send mail"><SmallIcon w={22}><path d="M17 7l4 4-4 4z" fill="#d22" /><Globe cx={8} /></SmallIcon></IconButton>
          <IconButton aria-label="Send and get"><SmallIcon w={22}><path d="M5 2v6L1 5z" fill="#d22" /><path d="M2 11v7l4-3z" fill="#22c" /><Globe cx={14} /></SmallIcon></IconButton>
        </IconRow>
        <IconRow>
          <IconButton aria-label="Money"><SmallIcon>{mailIcons.Dollar}</SmallIcon></IconButton>
          <IconButton aria-label="Hang up"><SmallIcon>{mailIcons.Phone}</SmallIcon></IconButton>
        </IconRow>
      </MailTools>
      <Tabs>
        <Tab $active>{"Message  [F8]"}</Tab>
        <Tab>{"Attachments  [F7]"}</Tab>
        <Tab>{"Special  [F9]"}</Tab>
      </Tabs>
      <ComposeForm onSubmit={(e) => e.preventDefault()}>
        <FieldsRow>
          <Fields>
            <FieldLabel htmlFor="to">T<u>o</u>:</FieldLabel>
            <Field id="to" defaultValue={'"Ernest Buckler" <ebuckler@icehouse.net>'} />
            <QueryButton type="button">?</QueryButton>
            <FieldLabel htmlFor="subj">S<u>u</u>bj:</FieldLabel>
            <Field id="subj" $wide defaultValue="Re: Single balancing stuff" />
            <FieldLabel htmlFor="cc">C<u>c</u>:</FieldLabel>
            <Field id="cc" />
            <QueryButton type="button">?</QueryButton>
          </Fields>
          <Actions>
            <ActionButton><SendIcon />Send</ActionButton>
            <ActionButton type="button"><TrashIcon />Cancel</ActionButton>
          </Actions>
        </FieldsRow>
        <OptionsRow>
          <Checks>
            <Option>Confirm <u>r</u>eading</Option>
            <Option>Copy <u>s</u>elf</Option>
            <Option>E<u>n</u>crypt...</Option>
            <Option>Confirm <u>d</u>elivery</Option>
            <Option>Ur<u>g</u>ent</Option>
            <Option>Rich te<u>x</u>t</Option>
          </Checks>
          <SigLabel htmlFor="sig">Sig:</SigLabel>
          <Dropdown w={97} value="No signature" id="sig" />
          <SpellButton type="button" aria-label="Spelling">
            <svg width="23" height="20" viewBox="0 0 23 20">
              <text x="3" y="9" fontFamily="Liberation Sans" fontSize="10">abc</text>
              <path d="M8 13l3 4 6-7" fill="none" stroke="#1010d0" strokeWidth="1.500" />
            </svg>
          </SpellButton>
        </OptionsRow>
      </ComposeForm>
      <Editor>
        <EditPane>
          <FormatBar>
            <FormatGroup $gap={5}>
              <Dropdown w={110} value="Arial" label="Font" />
              <Dropdown w={53} value="14" label="Size" />
            </FormatGroup>
            <FormatGroup>
              <FormatButton>B</FormatButton>
              <FormatButton><i>I</i></FormatButton>
              <FormatButton><u>U</u></FormatButton>
            </FormatGroup>
            <FormatGroup>
              {["right", "center", "full"].map((k) => <FormatButton key={k} aria-label={k}><AlignIcon kind={k} /></FormatButton>)}
            </FormatGroup>
            <FormatGroup>
              {["in", "out", "first"].map((k) => <FormatButton key={k} aria-label={k}><AlignIcon kind={k} /></FormatButton>)}
            </FormatGroup>
            <FormatButton>?</FormatButton>
          </FormatBar>
          <Body aria-label="Message text" defaultValue={message} spellCheck={false} />
          <HScroll>
            <ScrollButton aria-label="Scroll left"><Arrow dir="left" color="#808080" /></ScrollButton>
            <Track $grow={1} />
            <ScrollButton aria-label="Scroll right"><Arrow dir="right" color="#808080" /></ScrollButton>
          </HScroll>
        </EditPane>
        <VScroll>
          <ScrollButton aria-label="Scroll up"><Arrow dir="up" /></ScrollButton>
          <Track $grow={100} />
          <Thumb $flex="240 0 0px" />
          <Track $grow={98} />
          <ScrollButton aria-label="Scroll down"><Arrow /></ScrollButton>
          <Corner />
        </VScroll>
      </Editor>
      <Status>
        <StatusCell $w={251}>{"Press <F1> for help"}</StatusCell>
        <StatusCell $w={152} $center>mmoore</StatusCell>
        <StatusCell $w={112} $center>980 new</StatusCell>
      </Status>
    </AppWindow>
  );
}

/* ---------- office bar ---------- */
const Shortcuts = styled.aside`
  display: flex;
  flex-direction: column;
  align-items: center;
  width: 32px;
  margin-bottom: 2px;
  border: 1px solid;
  border-color: #fff #404040 #404040 #fff;
  box-shadow: inset -1px -1px #808080;
`;
const ShortcutsHead = styled.div`
  align-self: stretch;
  height: 15px;
  padding: 2px 1px;
  margin-bottom: 2px;
  background: #808080;
`;
const ShortcutsBody = styled.div`
  display: flex;
  flex-direction: column;
  align-items: center;
  align-self: stretch;
  flex: 1;
  padding-top: 2px;
  margin-right: 1px;
  background: linear-gradient(#000 80px, ${face} 240px);
`;
const OfficeButton = styled.button`
  ${sunken}
  ${dither}
  width: 24px;
  height: 24px;
  display: grid;
  place-items: center;
`;
const Vertical = styled.span`
  writing-mode: vertical-rl;
  color: ${(p) => (p.$brand ? "#808080" : "#fff")};
  font: ${(p) => (p.$brand ? "italic bold 16px/20px" : "18px/20px")} ${(p) => (p.$brand ? sans : ui)};
  height: ${(p) => (p.$brand ? "auto" : "59px")};
  padding-top: 3px;
  margin-top: ${(p) => (p.$brand ? "auto" : 0)};
  margin-bottom: ${(p) => (p.$brand ? "12px" : 0)};
`;
const Shortcut = styled.button`
  ${raised}
  display: grid;
  place-items: center;
  width: 23px;
  height: 22px;
`;
const Mini = ({ children }) => <svg width="17" height="17" viewBox="0 0 17 17">{children}</svg>;
const WinFlag = () => (
  <svg width="10" height="10" viewBox="0 0 10 10"><path d="M0 0h10v10H0z" /><path d="M1 1h4v4H1z" fill="#e00" /><path d="M5 1h4v4H5z" fill="#00e" /><path d="M1 5h4v4H1z" fill="#ff0" /><path d="M5 5h4v4H5z" fill="#080" /></svg>
);
const shortcuts = {
  Word: <text x="0" y="14" fontFamily="Liberation Serif" fontWeight="bold" fontStyle="italic" fontSize="17" fill="#00f0f8" stroke="#003038" strokeWidth="2" paintOrder="stroke">W</text>,
  Excel: <><path d="M11 2h5L5 15H1z" fill="#00a0a0" stroke="#024" /><path d="M1 3h5l10 11h-5z" fill="#40f0f0" stroke="#024" /></>,
  Key: <><path d="M8 8l8 6-1 2-3-1-5-5z" fill="#ee0" stroke="#330" /><circle cx="5.500" cy="5.500" r="4.500" fill="#ee0" stroke="#330" /><circle cx="4" cy="4" r="1.200" fill="#333" /></>,
  Documents: <><path d="M2 15V4l4-2 2 2h7v11z" fill="#c8c040" stroke="#440" /><path d="M5 5h8l2 8-8 1z" fill="#fffce0" /><path d="M3 16h13V6" fill="none" stroke="#000" /></>,
  Explorer: <><circle cx="8.500" cy="9" r="7" fill="#18c8e0" stroke="#013" /><path d="M5 9h7c0-4-6-4-7 0 0 4 5 4 7 2" fill="none" stroke="#023a90" strokeWidth="2" /><path d="M2 15C4 7 12 1 15 1" fill="none" stroke="#fff" /></>,
  Console: <><path d="M0 1h17v15H0z" fill="#000" stroke="#888" /><path d="M0 1h17v3H0z" fill="#088" /><text x="1" y="12" fontFamily="Liberation Mono" fontWeight="bold" fontSize="8" fill="#fff">C:\</text></>,
  Bin: <><path d="M3 3l9-1 3 10-8 4H3z" fill="#d8dcdc" /><path d="M2 1h8" stroke="#888" /><path d="M12 2l3 11-4 3" fill="none" stroke="#000" strokeWidth="1.500" /><path d="M4 7l6 0 2 3-7 2z" fill="#10c8d8" /></>,
  Drawer: <><path d="M2 0h15v16H2z" fill="#000" /><path d="M3 1h9v15H3z" fill="#d0d0cc" stroke="#888" /><path d="M5 4h5M5 8h6M5 12h6" stroke="#777" /></>,
  Tools: <><path d="M4 5h10l-1 11H5z" fill="#333" /><path d="M5 1v6M8 2v5M12 1v6" stroke="#a82" strokeWidth="2" /><path d="M6 9v6M9 8v6" stroke="#a8c8a0" strokeWidth="1.500" /><path d="M12 8l1 6" stroke="#d22" strokeWidth="2" /></>,
  Rocket: <><path d="M1 1v15M15 1v15" stroke="#111" strokeWidth="2" /><path d="M8 1l2 4v6H6V5z" fill="#d03020" stroke="#600" /><path d="M3 16q0-5 5-5t5 5z" fill="#10e0f0" /></>,
  Spiral: <><path d="M8 1l8 5-3 9-10-1-2-7z" fill="#1a1a1a" /><circle cx="6" cy="6" r="3" fill="#30c040" /><circle cx="11" cy="7" r="3" fill="#30b8e8" /><circle cx="7" cy="11" r="3" fill="#c030d0" /><circle cx="11.500" cy="11.500" r="2" fill="#e04020" /></>,
  Scanner: <><path d="M1 1l14 7-12 2z" fill="#fff" stroke="#000" strokeWidth="1.500" /><path d="M1 12l11-3 4 2-11 5z" fill="#fff" stroke="#000" strokeWidth="1.500" /><path d="M5 12l7-2" stroke="#a0f" strokeWidth="2" /></>,
  Swirl: <><circle cx="8.500" cy="8.500" r="7.500" fill="#e8f4f4" stroke="#066" /><path d="M8 8q2-1 2 1t-3 1.500T5 7.500 9 5t4 4-5 4.500-6-5" fill="none" stroke="#066" strokeWidth="1.500" /></>,
  Bird: <><path d="M0 0h17v17H0z" fill="#111" /><path d="M1 3l6 3 8-3-3 5-5 2 2 3-5-4z" fill="#e0e0e0" /><path d="M3 10h2" stroke="#d22" /></>,
  Mouse: <><path d="M0 0h9l-3 6-6 1z" fill="#8a8020" /><path d="M10 1h7v7z" fill="#203088" /><path d="M3 6l7-2 6 9-4 3-8-4z" fill="#e4e0dc" stroke="#666" /><path d="M2 7l3-2" stroke="#d22" strokeWidth="2" /></>,
  Star: <><circle cx="9" cy="8.500" r="7" fill="#203090" stroke="#aaa" /><path d="M8 1l1 5 6 2-5 2-3 4-1-4-5-1 5-2z" fill="#f4e020" /></>,
  Pictures: <><path d="M1 14V4l2-2h4l1 2h8v10z" fill="#f0e8a0" stroke="#998820" /><path d="M4 7h9v6H4z" fill="#fff" stroke="#444" /><path d="M6 9l2 2 3-2" stroke="#222" fill="none" /><path d="M10 11h3" stroke="#d22" strokeWidth="2" /></>,
  Winamp: <><path d="M7 1l9 3-5 12-9-4z" fill="#fff" stroke="#222" /><path d="M13 1L3 9l4 1-4 6 11-8-4-1z" fill="#f4e410" stroke="#660" /></>,
  Folder: <><path d="M1 15V3l2-1h5l1 2h6v11z" fill="#c8c060" stroke="#443c00" /><path d="M4 6h12v9H4z" fill="#d8d8b8" stroke="#666010" /></>,
};

function OfficeBar() {
  return (
    <Shortcuts>
      <ShortcutsHead><WinFlag /></ShortcutsHead>
      <ShortcutsBody>
        <OfficeButton aria-label="Office">
          <svg width="18" height="18" viewBox="0 0 18 18"><path d="M1 14V4l2-2h4l1 2h8v10z" fill="#f4f060" stroke="#999" /><g transform="translate(8 8)"><path d="M-1-1h10v10H-1z" /><path d="M0 0h4v4H0z" fill="#e00" /><path d="M4 0h4v4H4z" fill="#00e" /><path d="M0 4h4v4H0z" fill="#ff0" /><path d="M4 4h4v4H4z" fill="#080" /></g></svg>
        </OfficeButton>
        <Vertical>Office</Vertical>
        {Object.entries(shortcuts).map(([n, icon]) => <Shortcut key={n} aria-label={n}><Mini>{icon}</Mini></Shortcut>)}
        <Vertical $brand>Microsoft</Vertical>
      </ShortcutsBody>
    </Shortcuts>
  );
}

/* ---------- taskbar ---------- */
const Taskbar = styled.footer`
  display: flex;
  gap: 3px;
  height: 30px;
  padding: 2px 2px 3px;
  border-top: 1px solid #fff;
  background: ${face};
  font: 16px/20px ${ui};
`;
const TaskButton = styled.button`
  ${raised}
  display: flex;
  align-items: center;
  gap: 4px;
  flex: 1;
  min-width: 0;
  padding: 0 4px;
  overflow: hidden;
  white-space: nowrap;
  text-align: left;
  span {
    flex: 1;
  }
  ${(p) => p.$active && css`${sunken} ${dither}`}
`;
const StartButton = styled.button`
  ${raised}
  display: flex;
  align-items: center;
  gap: 2px;
  width: 65px;
  padding: 0 2px;
  margin-right: 1px;
  font-weight: bold;
`;
const Tray = styled.div`
  display: flex;
  align-items: center;
  gap: 4px;
  width: 128px;
  margin-left: 4px;
  padding: 0 16px 0 5px;
  border: 1px solid;
  border-color: #808080 #fff #fff #808080;
  time {
    margin-left: auto;
  }
`;
const StartFlag = () => (
  <svg width="16" height="16" viewBox="0 0 16 16">
    <path d="M2 3q3-2 6 0l-1 5Q4 6 1 8z" fill="#e05020" /><path d="M9 3q3 2 6 0l-1 5q-3 2-6 0z" fill="#60b030" /><path d="M1 9q3-2 6 0l-1 5q-3-2-6 0z" fill="#3070d0" /><path d="M8 9q3 2 6 0l-1 5q-3 2-6 0z" fill="#f0c020" />
  </svg>
);
const IeIcon = () => (
  <svg width="18" height="18" viewBox="0 0 18 18">
    <path d="M4 9.500h11c0-7-10-7-11 0 0 7 8 7 10 3" fill="none" stroke="#2c8ae0" strokeWidth="3" /><path d="M1 16C0 11 10 1 17 2" fill="none" stroke="#58b8f0" strokeWidth="1.500" />
  </svg>
);
const AmpIcon = () => (
  <svg width="18" height="18" viewBox="0 0 18 18"><path d="M9 1l8 2-5 13-10 1z" fill="#e8e8e8" stroke="#666" /><path d="M14 2L4 9l4 1-5 7 11-8-4-1z" fill="#f08c1c" stroke="#a04c08" /></svg>
);
const PaintIcon = () => (
  <svg width="18" height="18" viewBox="0 0 18 18"><path d="M5 8h9l-2 9H7z" fill="#b0b8bc" stroke="#667" /><path d="M6 9L3 1" stroke="#c03020" strokeWidth="2.500" /><path d="M9 9V1" stroke="#3080d0" strokeWidth="2.500" /><path d="M12 9l4-8" stroke="#e08020" strokeWidth="2.500" /></svg>
);
const FolderIcon = () => (
  <svg width="18" height="16" viewBox="0 0 18 16"><path d="M1 14V2h6l2 2h7v10z" fill="#e8b830" stroke="#a87c10" /><path d="M1 15l2-9h14v9z" fill="#fce68c" stroke="#b88c20" /></svg>
);
const ZaIcon = () => (
  <svg width="18" height="17" viewBox="0 0 18 17">
    <path d="M0 0h9v17H0z" fill="#800" /><path d="M9 0h9v17H9z" fill="#ff0" />
    <text x="1" y="14" fontFamily="Liberation Sans" fontWeight="bold" fontSize="13" fill="#fff">Z</text><text x="9" y="14" fontFamily="Liberation Sans" fontWeight="bold" fontSize="13" fill="#a00">A</text>
  </svg>
);

export default function App() {
  return (
    <>
      <Global />
      <Desktop>
        <Screen><Reader /></Screen>
        <Screen>
          <Upper><Mail /><OfficeBar /></Upper>
          <Taskbar>
            <StartButton><StartFlag />Start</StartButton>
            <TaskButton><IeIcon /><span>3 Internet ...</span><Arrow /></TaskButton>
            <TaskButton><PegasusIcon /><span>Pegasus Mai...</span></TaskButton>
            <TaskButton><AmpIcon /><span>9. COSTELL...</span></TaskButton>
            <TaskButton><PaintIcon /><span>kleurplaat_s...</span></TaskButton>
            <TaskButton><FolderIcon /><span>C:\DATA FI...</span></TaskButton>
            <TaskButton $active><AdobeIcon /><span>Adobe Rea...</span></TaskButton>
            <Tray><span>«</span><ZaIcon /><time>7:56 PM</time></Tray>
          </Taskbar>
        </Screen>
      </Desktop>
    </>
  );
}
